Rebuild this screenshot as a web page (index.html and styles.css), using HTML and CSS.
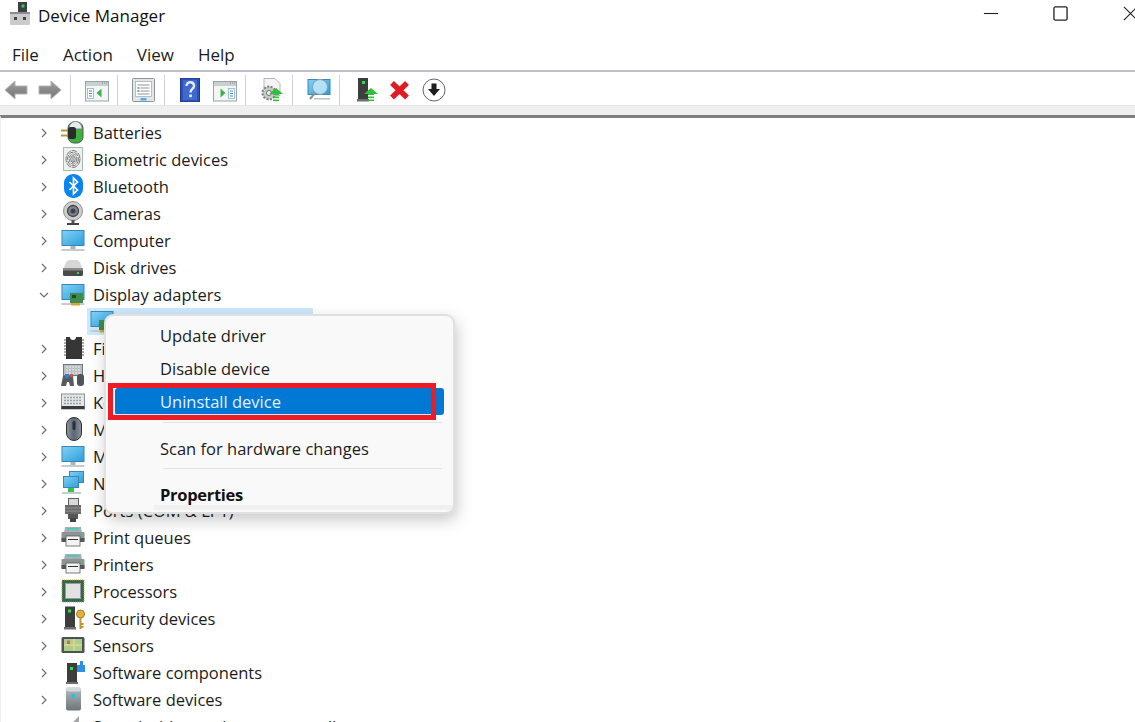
FILE: index.html
```html
<!DOCTYPE html>
<html lang="en">
<head>
<meta charset="utf-8">
<title>Device Manager</title>
<link rel="stylesheet" href="styles.css">
</head>
<body>
<svg class="defs" width="0" height="0" aria-hidden="true">
  <defs>
    <linearGradient id="scr" x1="0" y1="0" x2="1" y2="1"><stop offset="0" stop-color="#7fd0f5"/><stop offset="1" stop-color="#2f9fdc"/></linearGradient>
    <linearGradient id="bar" x1="0" y1="0" x2="0" y2="1"><stop offset="0" stop-color="#b5bcc2"/><stop offset="1" stop-color="#6d747a"/></linearGradient>
    <linearGradient id="mouse" x1="0" y1="0" x2="1" y2="0"><stop offset="0" stop-color="#8c96a3"/><stop offset=".5" stop-color="#5c6570"/><stop offset="1" stop-color="#8c96a3"/></linearGradient>
    <linearGradient id="arrow" x1="0" y1="0" x2="0" y2="1"><stop offset="0" stop-color="#9c9c9c"/><stop offset="1" stop-color="#777"/></linearGradient>
    <symbol id="monitor" viewBox="0 0 24 24">
      <rect x="0.5" y="2" width="23" height="16" fill="#3b86b8"/>
      <rect x="1.5" y="3" width="21" height="14" fill="url(#scr)"/>
      <rect x="9.5" y="18" width="5" height="3" fill="#a9b4bb"/>
      <rect x="0.5" y="21" width="23" height="2" fill="#c4ccd2"/>
    </symbol>
    <symbol id="printer" viewBox="0 0 24 24">
      <path d="M4 2h16l1 6H3z" fill="#a6b0b3"/>
      <rect x="6" y="3" width="12" height="1.5" fill="#45c9c0"/>
      <rect x="0.5" y="7" width="23" height="9" rx="1" fill="#8e9496"/>
      <rect x="0.5" y="13" width="23" height="4" fill="#52575a"/>
      <rect x="5" y="11" width="14" height="10" fill="#f4f4f4" stroke="#5c5c5c" stroke-width=".8"/>
      <rect x="7" y="14" width="10" height="1" fill="#333"/>
      <rect x="20" y="8.5" width="1.6" height="1.6" fill="#43d14a"/>
    </symbol>
    <symbol id="uparrow" viewBox="0 0 24 24">
      <path d="M12 9l7 6h-4v1H9v-1H5z" fill="#2fbf3a"/>
      <rect x="9" y="17.5" width="6" height="1.6" fill="#2fbf3a"/>
      <rect x="9" y="20.5" width="6" height="1.6" fill="#2fbf3a"/>
    </symbol>
  </defs>
</svg>

<div class="window">
  <header class="titlebar">
    <svg class="app-icon" viewBox="0 0 20 23" aria-hidden="true">
      <rect x="8" y="0" width="9" height="11" fill="#3b3f3f"/>
      <rect x="11.500" y="2.500" width="3" height="3" fill="#2fd05a"/>
      <rect x="0" y="10" width="20" height="13" rx="1" fill="#cbcbcb"/>
      <rect x="0" y="10" width="20" height="2" fill="#8d8d8d"/>
      <rect x="4" y="15" width="3" height="3" fill="#444"/>
      <rect x="13" y="15" width="3" height="3" fill="#444"/>
    </svg>
    <span class="title">Device Manager</span>
    <div class="window-controls">
      <svg class="wc" viewBox="0 0 16 16" aria-hidden="true"><path d="M1 8h15" stroke="#222" stroke-width="1.2" fill="none"/></svg>
      <svg class="wc" viewBox="0 0 16 16" aria-hidden="true"><rect x="1" y="1" width="14" height="14" rx="1.5" stroke="#222" stroke-width="1.4" fill="none"/></svg>
      <svg class="wc" viewBox="0 0 16 16" aria-hidden="true"><path d="M1 1l14 14M15 1L1 15" stroke="#222" stroke-width="1.2" fill="none"/></svg>
    </div>
  </header>

  <nav class="menubar">
    <span>File</span><span>Action</span><span>View</span><span>Help</span>
  </nav>

  <div class="toolbar">
    <svg class="btn" viewBox="0 0 24 24" aria-hidden="true"><path d="M1 12l10-9v5h12v8H11v5z" fill="url(#arrow)" stroke="#b4b4b4" stroke-width="1"/></svg>
    <svg class="btn" viewBox="0 0 24 24" aria-hidden="true"><path d="M23 12L13 3v5H1v8h12v5z" fill="url(#arrow)" stroke="#b4b4b4" stroke-width="1"/></svg>
    <i class="sep"></i>
    <svg class="btn" viewBox="0 0 24 24" aria-hidden="true">
      <rect x="0.500" y="3.500" width="23" height="19.500" fill="#f4f6f6" stroke="#9aa5a8"/>
      <rect x="1" y="4" width="22" height="4" fill="#c9cfd1"/>
      <path d="M17 5h1M19 5h1M21 5h1" stroke="#7c8588"/>
      <rect x="2.500" y="10.500" width="6" height="10" fill="#fff" stroke="#8ab2cf" stroke-width=".8"/>
      <path d="M4 13h3M4 15.500h3M4 18h3" stroke="#3f8fcb"/>
      <path d="M16.500 10.500v9l-5-4.500z" fill="#3fb14a"/>
    </svg>
    <i class="sep"></i>
    <svg class="btn" viewBox="0 0 24 24" aria-hidden="true">
      <rect x="0.500" y="0.500" width="22" height="23" rx="1" fill="#e3e6e7" stroke="#8c9598"/>
      <rect x="3.500" y="3.500" width="16" height="15" fill="#fff" stroke="#a9b0b3" stroke-width=".8"/>
      <path d="M5.500 7h12M8.500 10h9M8.500 13h9M5.500 16h12" stroke="#8b979c"/>
      <rect x="5.500" y="9" width="2" height="2" fill="#7da4bf"/>
      <rect x="5.500" y="12" width="2" height="2" fill="#7da4bf"/>
      <rect x="8.500" y="20" width="6" height="2.500" fill="#46b3e6"/>
    </svg>
    <i class="sep"></i>
    <svg class="btn" viewBox="0 0 24 24" aria-hidden="true">
      <rect x="1.500" y="0" width="19" height="24" fill="#2c51b5" stroke="#1f3a8c"/>
      <rect x="4" y="2" width="14" height="20" fill="#3f69cf"/>
      <path d="M7.500 8c0-5 7.500-5 7.500 0 0 3-3.500 3-3.500 6.500" stroke="#e6ecfa" stroke-width="2.400" fill="none"/>
      <rect x="10.200" y="16.500" width="2.700" height="2.700" fill="#e6ecfa"/>
    </svg>
    <svg class="btn" viewBox="0 0 24 24" aria-hidden="true">
      <rect x="0.500" y="3.500" width="23" height="19.500" fill="#f4f6f6" stroke="#9aa5a8"/>
      <rect x="1" y="4" width="22" height="4" fill="#c9cfd1"/>
      <path d="M17 5h1M19 5h1M21 5h1" stroke="#7c8588"/>
      <rect x="15.500" y="10.500" width="6" height="10" fill="#fff" stroke="#8ab2cf" stroke-width=".8"/>
      <path d="M17 13h3M17 15.500h3M17 18h3" stroke="#3f8fcb"/>
      <path d="M7.500 10.500v9l5-4.500z" fill="#3fb14a"/>
    </svg>
    <i class="sep"></i>
    <svg class="btn" viewBox="0 0 24 24" aria-hidden="true">
      <path d="M4 0.500h11l5 5v12H4z" fill="#f4f4f4" stroke="#b5b5b5"/>
      <circle cx="9" cy="15" r="6.500" fill="#c5c8c8" stroke="#7b7f7f" stroke-width="2" stroke-dasharray="2 1.500"/>
      <circle cx="9" cy="15" r="2.500" fill="#f4f4f4" stroke="#6f7373"/>
      <use href="#uparrow" x="4" y="1" width="24" height="24"/>
    </svg>
    <i class="sep"></i>
    <svg class="btn" viewBox="0 0 24 24" aria-hidden="true">
      <rect x="0.500" y="1" width="23" height="16" fill="#3b86b8"/>
      <rect x="1.500" y="2" width="21" height="14" fill="url(#scr)"/>
      <circle cx="13" cy="9" r="7.500" fill="#d4effa" fill-opacity=".75" stroke="#8aa0ac"/>
      <path d="M8 15l-5 6" stroke="#8b8f92" stroke-width="2"/>
      <rect x="7" y="20" width="16" height="1.500" fill="#b9c1c7"/>
    </svg>
    <i class="sep"></i>
    <svg class="btn" viewBox="0 0 24 24" aria-hidden="true">
      <rect x="4" y="0" width="10" height="21" fill="#3d3d3d"/>
      <rect x="3" y="21" width="12" height="2.500" fill="#6f6f6f"/>
      <rect x="8" y="3" width="3" height="3" fill="#25e04a"/>
      <use href="#uparrow" x="5" y="1" width="24" height="24"/>
    </svg>
    <svg class="btn" viewBox="0 0 24 24" aria-hidden="true"><path d="M4 5l15 14.500M19 5L4 19.500" stroke="#e01b24" stroke-width="5.500" fill="none"/></svg>
    <svg class="btn" viewBox="0 0 24 24" aria-hidden="true">
      <circle cx="12" cy="12" r="11" fill="#fff" stroke="#666" stroke-width="1"/>
      <path d="M9.500 5.500h5v5.500h3.500L12 18l-6-7h3.500z" fill="#1d1d1d"/>
    </svg>
  </div>
  <div class="strip"></div>

  <div class="workspace">
    <ul class="tree">
      <li class="row"><svg class="chev" viewBox="0 0 10 10" aria-hidden="true"><path d="M3 1l4 4-4 4"/></svg>
        <svg class="ico" viewBox="0 0 24 24" aria-hidden="true"><rect x="7" y="2" width="15" height="21" rx="6" fill="#3eb041" stroke="#4b5a4b"/><path d="M8 9c0-10 13-10 13 0z" fill="#e9eded" stroke="#7c8485"/><rect x="0" y="9.500" width="8" height="2" fill="#b09a3a"/><rect x="0" y="14.500" width="8" height="2" fill="#b09a3a"/><rect x="7" y="7" width="8" height="12" rx="2.500" fill="#2b2b2b"/></svg>
        <span>Batteries</span></li>
      <li class="row"><svg class="chev" viewBox="0 0 10 10" aria-hidden="true"><path d="M3 1l4 4-4 4"/></svg>
        <svg class="ico" viewBox="0 0 24 24" aria-hidden="true"><rect x="2.500" y="0.500" width="19" height="23" fill="#eef1f0" stroke="#a5bcb4"/><g fill="none" stroke="#6a6a6a" stroke-width=".9"><ellipse cx="12" cy="12" rx="7" ry="8.500" stroke-dasharray="6 1"/><ellipse cx="12" cy="12" rx="5.400" ry="6.800" stroke-dasharray="5 1"/><ellipse cx="12" cy="12" rx="3.800" ry="5.100" stroke-dasharray="4 1"/><ellipse cx="12" cy="12" rx="2.200" ry="3.400"/><path d="M12 9.500v6"/></g></svg>
        <span>Biometric devices</span></li>
      <li class="row"><svg class="chev" viewBox="0 0 10 10" aria-hidden="true"><path d="M3 1l4 4-4 4"/></svg>
        <svg class="ico" viewBox="0 0 24 24" aria-hidden="true"><rect x="3" y="0" width="19" height="24" rx="9" fill="#0a84f0"/><path d="M8.500 8l8 8-4 4V4l4 4-8 8" fill="none" stroke="#fff" stroke-width="1.700"/></svg>
        <span>Bluetooth</span></li>
      <li class="row"><svg class="chev" viewBox="0 0 10 10" aria-hidden="true"><path d="M3 1l4 4-4 4"/></svg>
        <svg class="ico" viewBox="0 0 24 24" aria-hidden="true"><circle cx="12" cy="10" r="9.500" fill="#cdcdcd" stroke="#8e8e8e"/><circle cx="12" cy="10" r="5.500" fill="#7d838c" stroke="#444" stroke-width="1.300"/><circle cx="12" cy="10" r="2.500" fill="#3b4250"/><rect x="10.500" y="19" width="3" height="3" fill="#555"/><rect x="6" y="22" width="12" height="2" fill="#444"/></svg>
        <span>Cameras</span></li>
      <li class="row"><svg class="chev" viewBox="0 0 10 10" aria-hidden="true"><path d="M3 1l4 4-4 4"/></svg>
        <svg class="ico" aria-hidden="true"><use href="#monitor"/></svg>
        <span>Computer</span></li>
      <li class="row"><svg class="chev" viewBox="0 0 10 10" aria-hidden="true"><path d="M3 1l4 4-4 4"/></svg>
        <svg class="ico" viewBox="0 0 24 24" aria-hidden="true"><path d="M3 13c1-5 3-8 6-8h6c3 0 5 3 6 8z" fill="#d6d6d6"/><rect x="2" y="13" width="20" height="8" rx="1.500" fill="#4a4a4a"/><rect x="2" y="13" width="20" height="2.500" fill="#8a8a8a"/><rect x="16" y="17" width="2" height="2" fill="#39d05a"/></svg>
        <span>Disk drives</span></li>
      <li class="row"><svg class="chev" viewBox="0 0 10 10" aria-hidden="true"><path d="M1 3l4 4 4-4"/></svg>
        <svg class="ico" aria-hidden="true"><use href="#monitor"/><rect x="9" y="11" width="13" height="10" fill="#3f8a4f"/><rect x="11" y="13" width="4" height="3" fill="#1f4a2a"/><rect x="10" y="21" width="9" height="2.500" fill="#d9a52c"/></svg>
        <span>Display adapters</span></li>
      <li class="row child"><div class="selected"><svg class="ico" aria-hidden="true"><use href="#monitor"/><rect x="9" y="11" width="13" height="10" fill="#3f8a4f"/><rect x="10" y="21" width="9" height="2.500" fill="#d9a52c"/></svg></div></li>
      <li class="row"><svg class="chev" viewBox="0 0 10 10" aria-hidden="true"><path d="M3 1l4 4-4 4"/></svg>
        <svg class="ico" viewBox="0 0 24 24" aria-hidden="true"><path d="M5 1h4a3 3 0 0 0 6 0h6v22H5z" fill="#363636"/><path d="M3 4h2M3 7h2M3 10h2M3 13h2M3 16h2M3 19h2M21 4h2M21 7h2M21 10h2M21 13h2M21 16h2M21 19h2" stroke="#8d8d8d" stroke-width="1.500"/></svg>
        <span>Firmware</span></li>
      <li class="row"><svg class="chev" viewBox="0 0 10 10" aria-hidden="true"><path d="M3 1l4 4-4 4"/></svg>
        <svg class="ico" viewBox="0 0 24 24" aria-hidden="true"><rect x="2.500" y="1.500" width="19" height="11" fill="#b9bfc4" stroke="#777"/><path d="M5 4h15M5 7h15M5 10h15" stroke="#ecf0f2" stroke-dasharray="2 1"/><path d="M2 13h10l1 10H9l-1-4H6l-1 4H0z" fill="#565b60"/><rect x="4" y="11" width="4" height="4" fill="#2d7fd8"/><rect x="9" y="11" width="3" height="3" fill="#e0503c"/><rect x="16" y="11" width="7" height="12" rx="3" fill="#4f555a"/></svg>
        <span>Human Interface Devices</span></li>
      <li class="row"><svg class="chev" viewBox="0 0 10 10" aria-hidden="true"><path d="M3 1l4 4-4 4"/></svg>
        <svg class="ico" viewBox="0 0 24 24" aria-hidden="true"><rect x="0.500" y="4" width="23" height="15" fill="#e4e7e8" stroke="#8a8f91"/><path d="M3 7.500h18M3 10.500h18M3 13.500h18" stroke="#9aa0a3" stroke-width="1.500" stroke-dasharray="2 1"/><rect x="0.500" y="16" width="23" height="3" fill="#3b3b3b"/></svg>
        <span>Keyboards</span></li>
      <li class="row"><svg class="chev" viewBox="0 0 10 10" aria-hidden="true"><path d="M3 1l4 4-4 4"/></svg>
        <svg class="ico" viewBox="0 0 24 24" aria-hidden="true"><rect x="5.500" y="0.500" width="15" height="23" rx="7.500" fill="url(#mouse)" stroke="#2e2e2e"/><rect x="11.500" y="4" width="3" height="9" rx="1.500" fill="#2c2f33"/></svg>
        <span>Mice and other pointing devices</span></li>
      <li class="row"><svg class="chev" viewBox="0 0 10 10" aria-hidden="true"><path d="M3 1l4 4-4 4"/></svg>
        <svg class="ico" aria-hidden="true"><use href="#monitor"/></svg>
        <span>Monitors</span></li>
      <li class="row"><svg class="chev" viewBox="0 0 10 10" aria-hidden="true"><path d="M3 1l4 4-4 4"/></svg>
        <svg class="ico" viewBox="0 0 24 24" aria-hidden="true"><rect x="8.500" y="0.500" width="14" height="11" fill="url(#scr)" stroke="#3b86b8"/><rect x="2.500" y="5.500" width="15" height="11" fill="url(#scr)" stroke="#3b86b8"/><path d="M7 17h6v4H7z" fill="#37c24a"/><rect x="1" y="21" width="19" height="2" fill="#c4ccd2"/></svg>
        <span>Network adapters</span></li>
      <li class="row"><svg class="chev" viewBox="0 0 10 10" aria-hidden="true"><path d="M3 1l4 4-4 4"/></svg>
        <svg class="ico" viewBox="0 0 24 24" aria-hidden="true"><rect x="7.500" y="0.500" width="10" height="7" fill="#d8d8d8" stroke="#5f5f5f"/><rect x="4" y="7" width="16" height="9" fill="#6a6a6a"/><path d="M4 10h16M4 13h16" stroke="#8f8f8f"/><rect x="7" y="16" width="10" height="5" fill="#555"/><rect x="9" y="20" width="6" height="4" fill="#444"/></svg>
        <span>Ports (COM &amp; LPT)</span></li>
      <li class="row"><svg class="chev" viewBox="0 0 10 10" aria-hidden="true"><path d="M3 1l4 4-4 4"/></svg>
        <svg class="ico" aria-hidden="true"><use href="#printer"/></svg>
        <span>Print queues</span></li>
      <li class="row"><svg class="chev" viewBox="0 0 10 10" aria-hidden="true"><path d="M3 1l4 4-4 4"/></svg>
        <svg class="ico" aria-hidden="true"><use href="#printer"/></svg>
        <span>Printers</span></li>
      <li class="row"><svg class="chev" viewBox="0 0 10 10" aria-hidden="true"><path d="M3 1l4 4-4 4"/></svg>
        <svg class="ico" viewBox="0 0 24 24" aria-hidden="true"><rect x="1" y="1" width="22" height="22" fill="#2f6b4b" stroke="#c49b3a" stroke-dasharray="1 1"/><rect x="4.500" y="4.500" width="15" height="15" fill="#e2e2e2" stroke="#9a9a9a"/></svg>
        <span>Processors</span></li>
      <li class="row"><svg class="chev" viewBox="0 0 10 10" aria-hidden="true"><path d="M3 1l4 4-4 4"/></svg>
        <svg class="ico" viewBox="0 0 24 24" aria-hidden="true"><rect x="4" y="0.500" width="10" height="21" fill="#3d3d3d"/><rect x="3" y="21" width="12" height="2.500" fill="#6f6f6f"/><rect x="7" y="3.500" width="3" height="3" fill="#25e04a"/><circle cx="19.500" cy="8" r="4" fill="#e0b040" stroke="#a67c1e"/><path d="M19.500 12v11M19.500 18h3M19.500 21h3" stroke="#c4962e" stroke-width="2"/></svg>
        <span>Security devices</span></li>
      <li class="row"><svg class="chev" viewBox="0 0 10 10" aria-hidden="true"><path d="M3 1l4 4-4 4"/></svg>
        <svg class="ico" viewBox="0 0 24 24" aria-hidden="true"><rect x="0.500" y="4" width="23" height="16" rx="1.500" fill="#4d5352"/><rect x="3" y="6" width="18" height="12" fill="#a9cf8f"/><path d="M3 12h18M13 6v12" stroke="#e8d58a" stroke-width="1.500"/><rect x="6" y="7.500" width="3" height="3.500" fill="#e0605a"/></svg>
        <span>Sensors</span></li>
      <li class="row"><svg class="chev" viewBox="0 0 10 10" aria-hidden="true"><path d="M3 1l4 4-4 4"/></svg>
        <svg class="ico" viewBox="0 0 24 24" aria-hidden="true"><rect x="6" y="3" width="10" height="19" fill="#3d3d3d"/><rect x="5" y="22" width="12" height="2" fill="#6f6f6f"/><rect x="9" y="7" width="3" height="3" fill="#25e04a"/><path d="M16 5h3V1h3v4h2v7h-8z" fill="#2f8fe0"/></svg>
        <span>Software components</span></li>
      <li class="row"><svg class="chev" viewBox="0 0 10 10" aria-hidden="true"><path d="M3 1l4 4-4 4"/></svg>
        <svg class="ico" viewBox="0 0 24 24" aria-hidden="true"><rect x="5" y="0.500" width="15" height="23" rx="2" fill="url(#bar)"/><rect x="5" y="0.500" width="15" height="4" rx="2" fill="#d5d9db"/><rect x="10.500" y="7" width="3.500" height="3.500" fill="#1fc6d8"/></svg>
        <span>Software devices</span></li>
      <li class="row"><svg class="chev" viewBox="0 0 10 10" aria-hidden="true"><path d="M3 1l4 4-4 4"/></svg>
        <svg class="ico" viewBox="0 0 24 24" aria-hidden="true"><path d="M5 10h5l8-8v20l-8-8H5z" fill="#a4a8ab"/></svg>
        <span>Sound, video and game controllers</span></li>
    </ul>

    <div class="context-menu">
      <div class="item">Update driver</div>
      <div class="item">Disable device</div>
      <div class="item active">Uninstall device</div>
      <div class="menu-sep"></div>
      <div class="item">Scan for hardware changes</div>
      <div class="menu-sep"></div>
      <div class="item bold">Properties</div>
      <div class="menu-foot"></div>
    </div>
    <div class="highlight-box"></div>
  </div>
</div>
</body>
</html>
```
FILE: styles.css
```css
* { box-sizing: border-box; }
html, body { margin: 0; padding: 0; height: 100%; background: #fff; }
body {
  font-family: "Open Sans", "Noto Sans", "Liberation Sans", sans-serif;
  font-size: 16px;
  color: #1c1c1c;
  overflow: hidden;
}
.defs { position: absolute; }
.window { display: flex; flex-direction: column; height: 722px; overflow: hidden; }

.titlebar { flex: none; display: flex; align-items: center; height: 30px; padding-left: 10px; }
.app-icon { width: 20px; height: 23px; margin: 0 8px 3px 0; }
.title { font-size: 17px; color: #111; }
.window-controls { margin-left: auto; display: flex; align-items: center; gap: 55px; margin-right: -3px; margin-bottom: 3px; }
.wc { width: 15px; height: 15px; display: block; }

.menubar { flex: none; display: flex; height: 42px; align-items: center; padding: 8px 0 0 12px; gap: 24px; font-size: 17px; border-bottom: 2px solid #bcbfc7; }

.toolbar { flex: none; display: flex; align-items: center; height: 33px; padding: 3px 0 0 4px; }
.btn { width: 24px; height: 24px; flex: none; }
.btn + .btn { margin-left: 10px; }
.sep { width: 1px; height: 30px; background: #d2d2d2; margin: 0 14px 0 8px; flex: none; }

.strip { flex: none; height: 10px; background: #efefef; border-top: 1px solid #e6e6e6; }

.workspace { position: relative; flex: none; height: 607px; border-top: 3px solid #7f7f7f; border-left: 1px solid #f0f0f0; }

.tree { list-style: none; margin: 0; padding: 1px 0 0; }
.row { display: flex; align-items: center; height: 27px; padding-left: 38px; font-size: 16.500px; }
.chev { width: 10px; height: 10px; fill: none; stroke: #707070; stroke-width: 1.200; margin-right: 12px; flex: none; }
.ico { width: 24px; height: 24px; margin: 0 8px 1px 0; flex: none; }
.child { padding-left: 86px; }
.selected { display: flex; align-items: center; width: 226px; height: 27px; padding-left: 3px; background: #cce8ff; }

.context-menu {
  position: absolute; left: 103px; top: 196px; width: 351px; height: 200px;
  display: flex; flex-direction: column; padding-top: 3px;
  background: #f9f9f9; border: 2px solid #e0e0e0; border-radius: 9px;
  box-shadow: 2px 6px 16px rgba(0, 0, 0, .22);
  overflow: hidden;
}
.item { flex: none; height: 27px; line-height: 27px; margin: 3px 9px; padding-left: 45px; font-size: 16.500px; border-radius: 3px; }
.active { background: #0078d4; color: #e3f1fb; margin-bottom: 4px; }
.bold { font-weight: 700; color: #111; letter-spacing: -0.300px; }
.menu-sep { flex: none; height: 1px; margin: 3px 11px 9px 57px; background: #e2e2e2; }
.menu-foot { position: absolute; left: 48px; right: 0; bottom: 2px; height: 5px; background: #f0f0f0; }

.highlight-box { position: absolute; left: 107px; top: 265px; width: 328px; height: 37px; border: 5px solid #ed1c24; box-shadow: inset 0 -1px 0 #cfe4f7; }
```
